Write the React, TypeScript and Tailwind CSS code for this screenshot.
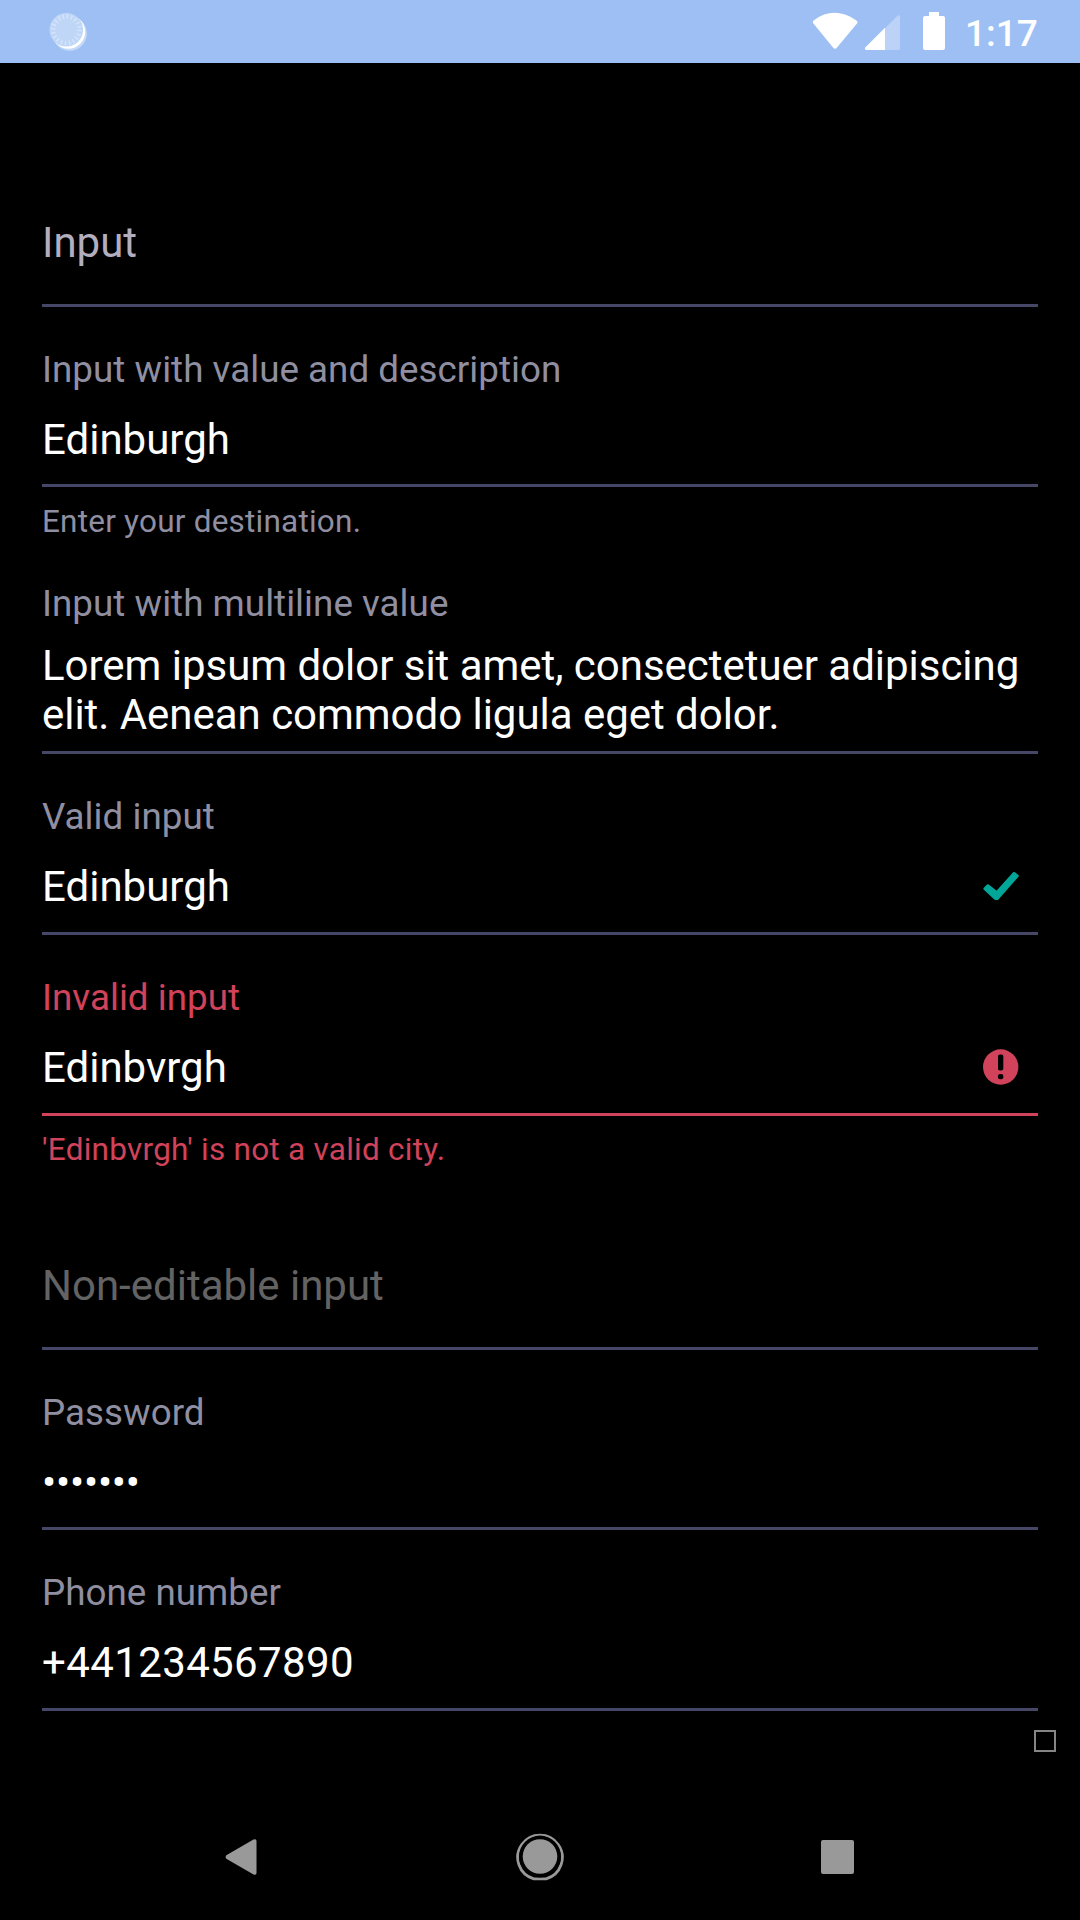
import React from "react";

type FieldProps = {
  label?: string;
  value: string;
  labelColor?: string;
  box: string;
  valueColor?: string;
  tracking?: string;
  line?: string;
  icon?: React.ReactNode;
  description?: string;
  descriptionBox?: string;
};

function Field({ label, value, labelColor = "text-[#8f8fa1]", box, valueColor = "text-white", tracking = "tracking-normal", line = "bg-[#464766]", icon, description, descriptionBox = "mt-[13px] tracking-[0.22px]" }: FieldProps) {
  return (
    <section className="flex flex-col">
      {label && <label className={`text-[36.75px] leading-[44px] tracking-[0.03px] ${labelColor}`}>{label}</label>}
      <div className={`flex justify-between whitespace-pre-line text-[42px] leading-[49px] ${tracking} ${box} ${valueColor}`}>
        <span>{value}</span>
        {icon}
      </div>
      <div className={`h-[3px] ${line}`} />
      {description && <p className={`text-[31.5px] leading-[44px] ${descriptionBox} ${labelColor}`}>{description}</p>}
    </section>
  );
}

const CheckIcon = () => (
  <svg className="mt-[10px] mr-[19px] h-[30px] w-[37px]" viewBox="982 872 37 30">
    <path d="M984.900 888.700L987.800 885.700L996.700 892.700L1014 873.500L1017.200 876L997.300 898.500H995.300Z" fill="#00a698" stroke="#00a698" strokeWidth="3" strokeLinejoin="round" />
  </svg>
);

const AlertIcon = () => (
  <svg className="mt-[6px] mr-[19px] h-[37px] w-[37px]" viewBox="0 0 37 37">
    <circle cx="18.7" cy="18" r="17.7" fill="#d1435b" />
    <rect x="16" y="5.5" width="5.3" height="16" rx="1.8" fill="black" />
    <rect x="16" y="25" width="5.3" height="5.2" rx="2" fill="black" />
  </svg>
);

export default function App() {
  return (
    <div className="flex h-[1920px] w-[1080px] flex-col bg-black font-['Roboto',sans-serif]">
      <header className="flex h-[63px] shrink-0 items-center bg-[#9dbff3]">
        <svg className="ml-[48px] h-[42px] w-[42px]" viewBox="48 10.5 42 42" fill="none">
          <circle cx="69.7" cy="33" r="17.2" fill="#c4d9f7" />
          <circle cx="68.4" cy="31.4" r="16.8" fill="white" />
          <circle cx="66.3" cy="29.3" r="16.8" fill="#bfd6f7" />
          <circle cx="66.3" cy="29.3" r="13.2" stroke="#d5e4fa" strokeWidth="4.6" strokeDasharray="1.45 2.697" />
        </svg>
        <svg className="ml-[722px] h-[42px] w-[136px]" viewBox="812 11 136 42" fill="white">
          <path d="M813.4 23.5Q812 21.5 814 20.2Q834 5.5 856 20.2Q858.500 21.500 857 23.500L837 47.500Q835 50 833 47.500Z" />
          <path opacity=".32" d="M865 48.500L897.500 15.700Q900 14.500 900 17V48.500Q900 50 898.500 50H866Q864.500 50 865 48.500Z" />
          <path d="M885 27.800V50H866.500Q864.500 50 865 47.700Z" />
          <path d="M929 12H939V16H943Q945 16 945 18V48Q945 50 943 50H925Q923 50 923 48V18Q923 16 925 16H929Z" />
        </svg>
        <span className="ml-[17px] pt-[4px] text-[37px] leading-[42px] font-medium text-white">1:17</span>
      </header>
      <main className="flex flex-1 flex-col px-[42px]">
        <Field value="Input" box="mt-[155px] h-[86px]" valueColor="text-[#b2aebd]" />
        <div className="h-[41px]" />
        <Field label="Input with value and description" value="Edinburgh" box="mt-[23px] h-[69px]" description="Enter your destination." />
        <div className="h-[38px]" />
        <Field label="Input with multiline value" tracking="tracking-[-0.03px]" value={"Lorem ipsum dolor sit amet, consectetuer adipiscing\nelit. Aenean commodo ligula eget dolor."} box="mt-[15px] h-[110px]" />
        <div className="h-[41px]" />
        <Field label="Valid input" value="Edinburgh" box="mt-[23px] h-[70px]" icon={<CheckIcon />} />
        <div className="h-[41px]" />
        <Field label="Invalid input" labelColor="text-[#d1435b]" line="bg-[#d1435b]" value="Edinbvrgh" box="mt-[23px] h-[70px]" icon={<AlertIcon />} description="'Edinbvrgh' is not a valid city." descriptionBox="mt-[12px] mb-px tracking-[0.26px]" />
        <Field value="Non-editable input" box="mt-[88px] h-[86px]" valueColor="text-[#636363]" />
        <div className="h-[41px]" />
        <Field label="Password" value="•••••••" tracking="tracking-[-0.2px]" box="mt-[23px] h-[69px]" />
        <div className="h-[41px]" />
        <Field label="Phone number" value="+441234567890" tracking="tracking-[0.38px]" box="mt-[23px] h-[70px]" />
        <div className="mt-[19px] mr-[-18px] h-[22px] w-[22px] self-end border-2 border-[#858585]" />
      </main>
      <nav className="flex h-[126px] shrink-0 items-center justify-between pr-[226px] pl-[225px]">
        <svg className="h-[40px] w-[33px]" viewBox="225 1837 33 40" fill="#999">
          <path d="M226.300 1858.800Q225 1857 226.300 1855.200L253.500 1839.600Q256.500 1838.400 256.500 1841V1873Q256.500 1875.600 253.500 1874.400Z" />
        </svg>
        <svg className="h-[50px] w-[50px]" viewBox="-25 -24.500 50 50">
          <path d="M-6.200 22.300A22.300 22.300 0 1 1 6.200 22.300Z" fill="none" stroke="#999" strokeWidth="2.800" />
          <circle cx="0" cy="0" r="20.900" fill="black" />
          <circle cx="0" cy="0" r="17.300" fill="#999" />
        </svg>
        <div className="h-[34px] w-[33px] rounded-[2px] bg-[#999]" />
      </nav>
    </div>
  );
}
